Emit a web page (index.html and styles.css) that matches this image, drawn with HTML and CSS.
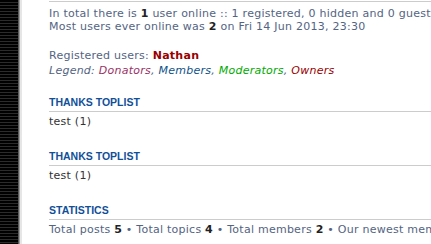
FILE: index.html
```html
<!DOCTYPE html>
<html>
<head>
  <title>Who is online</title>
<link rel="stylesheet" href="styles.css"></head>
<body>

  <div class="page">
    <div class="rail"></div>
    <div class="edge"></div>

    <div class="content">
      <div class="online">
        <p>In total there is <strong>1</strong> user online :: 1 registered, 0 hidden and 0 guests (based on users active over the past 5 minutes)</p>
        <p>Most users ever online was <strong>2</strong> on Fri 14 Jun 2013, 23:30</p>

        <p class="registered">Registered users: <a class="owner name" href="#">Nathan</a></p>
        <p class="legend">Legend: <span class="donator">Donators</span>, <span class="member">Members</span>, <span class="moderator">Moderators</span>, <span class="owner">Owners</span></p>
      </div>

      <h3>Thanks toplist</h3>
      <p class="toplist">test (1)</p>

      <h3>Thanks toplist</h3>
      <p class="toplist">test (1)</p>

      <h3>Statistics</h3>
      <p>Total posts <strong>5</strong> &bull; Total topics <strong>4</strong> &bull; Total members <strong>2</strong> &bull; Our newest member <strong>test</strong></p>
    </div>
  </div>

</body>
</html>
```

FILE: styles.css
```css
body {
  margin: 0;
  font-family: "DejaVu Sans", Verdana, sans-serif;
  font-size: 11px;
  letter-spacing: 0.25px;
  color: #536482;
  background-color: #fff;
}

.page {
  display: flex;
  height: 244px;
  overflow: hidden;
}

.rail {
  width: 18px;
  flex-shrink: 0;
  background: repeating-linear-gradient(to bottom, #000 0, #000 2px, #2b2b2b 2px, #2b2b2b 3px);
}

.edge {
  width: 4px;
  flex-shrink: 0;
  background: linear-gradient(to right, #5a5a5a 0, #5a5a5a 1px, #9a9a9a 1px, #9a9a9a 2px, #e6e6e6 2px);
}

.content {
  flex: 1;
  padding-left: 27px;
  white-space: nowrap;
  overflow: hidden;
}

p {
  margin: 0;
  line-height: 13px;
}

strong {
  color: #222;
}

.online {
  margin-top: 1px;
  border-top: 1px solid #ccc;
  padding-top: 5px;
}

.registered {
  margin-top: 16px;
  line-height: 14px;
}

.legend {
  margin-top: 1px;
  font-style: italic;
}

.name {
  font-weight: bold;
  text-decoration: none;
}

.donator { color: #993366; }
.member { color: #105289; }
.moderator { color: #00aa00; }
.owner { color: #990000; }

h3 {
  margin: 19px 0 3px 0;
  padding-bottom: 2px;
  border-bottom: 1px solid #ccc;
  font-family: "Liberation Sans", Arial, sans-serif;
  font-size: 10.5px;
  letter-spacing: 0;
  line-height: 13px;
  text-transform: uppercase;
  color: #115098;
}

.toplist {
  color: #333;
  margin-bottom: 22px;
}

.toplist + h3 {
  margin-top: 0;
}
```
